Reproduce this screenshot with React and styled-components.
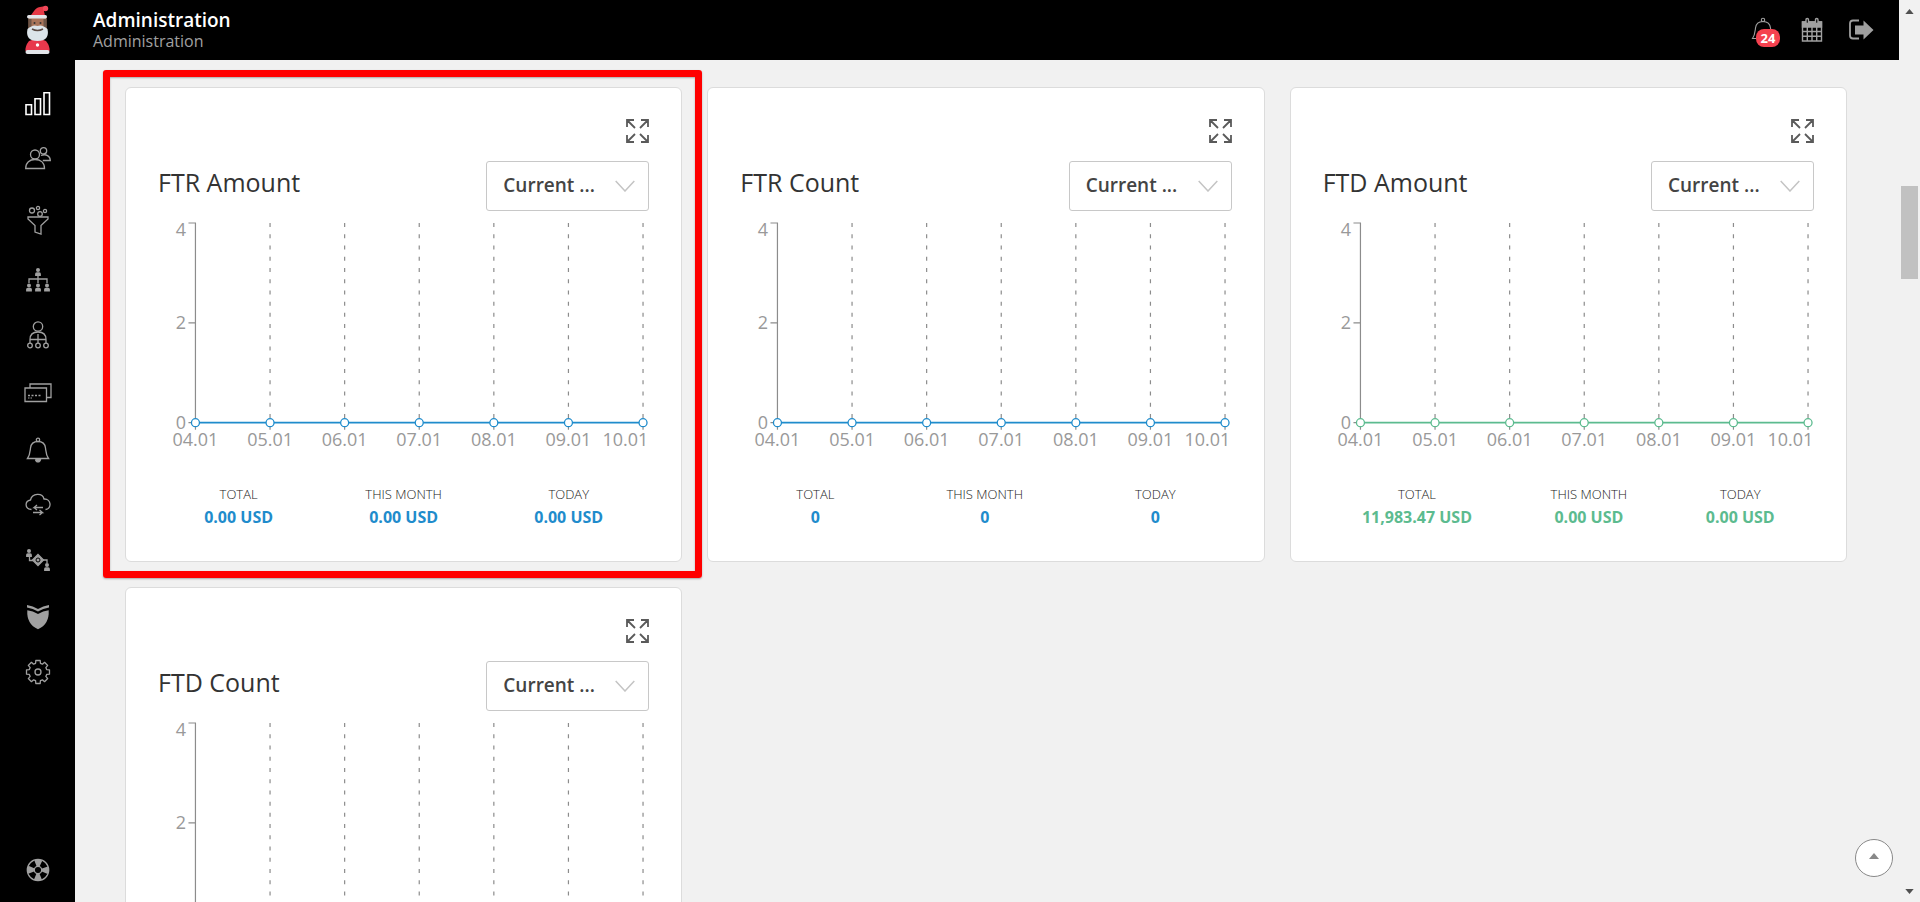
import React from "react";
import styled, { createGlobalStyle } from "styled-components";

const GlobalStyle = createGlobalStyle`
  *, *::before, *::after { box-sizing: border-box; }
  body {
    margin: 0;
    background: #f1f1f1;
    color: #333;
    font-family: "Open Sans", "Noto Sans", sans-serif;
  }
  button, select { font-family: inherit; }
  svg { display: block; }
`;

const Shell = styled.div`
  display: flex;
  height: 100vh;
  overflow: hidden;
`;

const Sidebar = styled.nav`
  display: flex;
  flex-direction: column;
  align-items: center;
  flex: none;
  width: 75px;
  background: #000;
`;

const Logo = styled.a`
  display: block;
  padding-top: 5px;
  height: 77px;
`;

const NavList = styled.ul`
  display: flex;
  flex-direction: column;
  flex: 1;
  margin: 0;
  padding: 0;
  list-style: none;
`;

const NavItem = styled.li`
  &:last-child {
    margin-top: auto;
    margin-bottom: 4px;
  }
`;

const NavLink = styled.a`
  display: grid;
  place-items: center;
  width: 75px;
  height: ${(p) => p.$height}px;
  color: ${(p) => (p.$active ? "#fff" : "#a0a0a0")};
`;

const Main = styled.div`
  display: flex;
  flex-direction: column;
  flex: 1;
  min-width: 0;
`;

const Header = styled.header`
  display: flex;
  align-items: center;
  justify-content: space-between;
  flex: none;
  height: 60px;
  padding: 0 25px 0 18px;
  background: #000;
`;

const Heading = styled.h1`
  margin: 0;
  color: #fff;
  font-size: 19px;
  line-height: 22px;
  font-weight: 600;
`;

const SubHeading = styled.p`
  margin: 0;
  color: #a0a0a0;
  font-size: 16px;
  line-height: 20px;
`;

const HeaderActions = styled.div`
  display: flex;
  align-items: center;
  gap: 23px;
`;

const HeaderButton = styled.button`
  position: relative;
  display: grid;
  place-items: center;
  width: 26px;
  height: 30px;
  padding: 0;
  border: 0;
  background: none;
  color: #a0a0a0;
`;

const Badge = styled.span`
  position: absolute;
  top: 14px;
  left: 6px;
  width: 24px;
  border-radius: 8px;
  background: #f5414f;
  color: #fff;
  font-size: 13px;
  line-height: 18px;
  font-weight: 700;
`;

const Board = styled.main`
  display: grid;
  grid-template-columns: repeat(3, minmax(0, 1fr));
  align-content: start;
  gap: 25px;
  flex: 1;
  min-height: 0;
  overflow: hidden;
  padding: 27px 52px 0 50px;
`;

const Card = styled.section`
  position: relative;
  padding: 30px 32px 31px;
  border: 1px solid #dcdcdc;
  border-radius: 6px;
  background: #fff;
`;

const Highlight = styled.div`
  position: absolute;
  inset: -18px -21px -17px -23px;
  border: 7px solid #f00;
  border-radius: 3px;
  box-shadow: 0 1px 2px rgba(0, 0, 0, 0.3), inset 0 1px 2px rgba(0, 0, 0, 0.3);
  pointer-events: none;
`;

const CardTools = styled.div`
  display: flex;
  justify-content: flex-end;
`;

const ExpandButton = styled.button`
  padding: 0;
  border: 0;
  background: none;
  color: #5a5a5a;
`;

const CardHead = styled.div`
  display: flex;
  align-items: center;
  justify-content: space-between;
  margin-top: 17px;
`;

const CardTitle = styled.h2`
  margin: 0 0 8px;
  color: #333;
  font-size: 25px;
  line-height: 34px;
  font-weight: 400;
`;

const SelectBox = styled.div`
  display: grid;
  align-items: center;
  width: 163px;

  & > * { grid-area: 1 / 1; }
  & > svg {
    justify-self: end;
    margin-right: 14px;
    pointer-events: none;
  }
`;

const PeriodSelect = styled.select`
  appearance: none;
  width: 100%;
  height: 50px;
  padding: 0 40px 2px 16px;
  border: 1px solid #c8c8c8;
  border-radius: 3px;
  background: #fff;
  color: #444;
  font-size: 19px;
  font-weight: 600;
`;

const ChartSvg = styled.svg`
  width: 100%;
  height: auto;
  margin-top: 4px;
  overflow: visible;

  text {
    fill: #999;
    font-size: 18px;
  }
`;

const Stats = styled.dl`
  display: flex;
  justify-content: space-around;
  margin: 29px 0 0;
  text-align: center;
`;

const StatLabel = styled.dt`
  color: #222;
  font-size: 13px;
  line-height: 20px;
  font-weight: 300;
  text-transform: uppercase;
`;

const StatValue = styled.dd`
  margin: 0;
  color: ${(p) => p.$color};
  font-size: 16px;
  line-height: 26px;
  font-weight: 700;
`;

const ScrollTrack = styled.div`
  display: flex;
  flex-direction: column;
  align-items: center;
  flex: none;
  width: 21px;
  padding: 9px 0 8px;
  background: #f1f1f1;
`;

const ScrollThumb = styled.div`
  width: 17px;
  height: 93px;
  margin: 172px 0 auto;
  background: #c1c1c1;
`;

const ToTop = styled.button`
  position: fixed;
  right: 27px;
  bottom: 25px;
  display: grid;
  place-items: center;
  width: 38px;
  height: 38px;
  padding: 0 0 4px;
  border: 1px solid #888;
  border-radius: 50%;
  background: #fff;
  color: #888;
`;

const Icon = ({ w = 26, h = 26, vb, children, ...rest }) => (
  <svg width={w} height={h} viewBox={vb || `0 0 ${w} ${h}`} fill="none" stroke="currentColor" strokeWidth="1.3" aria-hidden="true" {...rest}>
    {children}
  </svg>
);

const Santa = () => (
  <svg width="26" height="50" viewBox="0 0 26 50" aria-hidden="true">
    <path d="M5 11C8 9 9 3 15 2Q18 1 21 2L22 5L19 6L20 11Z" fill="#e63946" />
    <circle cx="20.500" cy="3.500" r="2.700" fill="#f0485a" />
    <rect x="3.500" y="12" width="18" height="13" fill="#a9745a" />
    <path d="M3.500 14h3v10h-3zM18.500 14h3v10h-3z" fill="#6d5548" />
    <rect x="2" y="10" width="20" height="3.500" rx="1.700" fill="#e3e6ea" />
    <path d="M4 36Q13 32 21 36Q25 41 24.500 46H.5Q0 41 4 36Z" fill="#e8384d" />
    <rect x=".5" y="45" width="24" height="4" rx="2" fill="#e3e6ea" />
    <path d="M2.500 24Q8 19 12.500 21Q17 19 22.500 24Q25 36 12.500 36Q0 36 2.500 24Z" fill="#dce4ea" />
    <path d="M7 24Q12.500 27 18 24" stroke="#5b4a44" strokeWidth="1.500" fill="none" />
    <circle cx="9.500" cy="18" r="1" fill="#333" />
    <circle cx="15.500" cy="18" r="1" fill="#333" />
    <circle cx="12.500" cy="40" r="1.700" fill="#fff" />
  </svg>
);

const BellPath = () => (
  <>
    <path d="M2.500 21.500C5 18 5 15 5.500 11C6 6.500 8.500 4.500 13 4.500S20 6.500 20.500 11C21 15 21 18 23.500 21.500Z" />
    <circle cx="13" cy="2.900" r="1.700" />
  </>
);

const person = (x, y) => (
  <g key={`${x}-${y}`} fill="currentColor" stroke="none">
    <circle cx={x} cy={y} r="2" />
    <path d={`M${x - 2.900} ${y + 6}V${y + 4}q0-1.700 1.700-1.700h2.400q1.700 0 1.700 1.700v2z`} />
  </g>
);

const gearPath = (() => {
  const n = 8;
  const points = [];
  for (let i = 0; i < n; i++) {
    const a = (i * 2 * Math.PI) / n - Math.PI / 2;
    [[-0.27, 9], [-0.19, 11.700], [0.19, 11.700], [0.27, 9]].forEach(([d, r]) => {
      points.push(`${(13 + r * Math.cos(a + d)).toFixed(2)} ${(13 + r * Math.sin(a + d)).toFixed(2)}`);
    });
  }
  return `M${points.join("L")}Z`;
})();

const icons = {
  bars: (
    <Icon strokeWidth="1.600">
      <path d="M1 14.800h5.500v9.700H1zM10 8.800h5.500v15.700H10zM19 2.800h5.500v21.700H19z" />
    </Icon>
  ),
  users: (
    <Icon>
      <circle cx="10" cy="8.500" r="4.500" />
      <path d="M.7 22.500c0-6 4-9 9.300-9s9.500 3 9.500 9z" />
      <circle cx="18.500" cy="4.800" r="3.200" />
      <path d="M16 9.500c5-2 9.300.5 9.300 5h-7.500" />
    </Icon>
  ),
  funnel: (
    <Icon w={26} h={30}>
      <circle cx="7" cy="5.500" r="2.500" />
      <circle cx="13" cy="3" r="1.600" />
      <circle cx="20" cy="6" r="1.600" />
      <circle cx="15" cy="9" r="2.300" />
      <path d="M3 12h20v2l-7 6.500v8.500l-6-2v-6.500L3 14z" />
    </Icon>
  ),
  tree: (
    <Icon>
      {person(13, 3)}
      {person(4, 18.500)}
      {person(13, 18.500)}
      {person(22, 18.500)}
      <path d="M13 9v7M4 16v-4h18v4" />
    </Icon>
  ),
  manager: (
    <Icon w={26} h={28}>
      <circle cx="13" cy="5.500" r="4.700" />
      <path d="M5 18.500c0-5 3-7.500 8-7.500s8 2.500 8 7.500zM13 13v9M5 22v-3.500M21 22v-3.500" />
      <circle cx="5" cy="24.500" r="2.300" />
      <circle cx="13" cy="24.500" r="2.300" />
      <circle cx="21" cy="24.500" r="2.300" />
    </Icon>
  ),
  cards: (
    <Icon w={28} h={22}>
      <path d="M1 6h21.500v13.500H1zM6 6V2h21v13.500h-4.500" />
      <path d="M4 13.500h14" strokeDasharray="2 1.500" />
      <path d="M4 16h4" strokeDasharray="1.500 1" strokeWidth="1" />
    </Icon>
  ),
  bell: (
    <Icon>
      <BellPath />
      <path d="M10.500 22.500h5q-.5 2.300-2.500 2.300t-2.500-2.300" fill="currentColor" />
    </Icon>
  ),
  cloud: (
    <Icon>
      <path d="M6.500 18.500C-.5 18-.5 10 5.500 9C7 2 17.500 1.500 19 8C26.500 7.500 27 18 20.500 18.500" />
      <path d="M18 16.500H9l3-2.500M9 16.500l3 2.500M8 21.500h9.500l-3-2.500M17.500 21.500l-3 2.500" />
    </Icon>
  ),
  flow: (
    <Icon>
      {person(4, 4)}
      {person(22, 18)}
      <path d="M4.500 10v3.500H8M18 13h4v3" />
      <path d="M13 7.500l5.500 5.500-5.500 5.500L7.500 13z" fill="currentColor" />
      <circle cx="13" cy="13" r="2" stroke="#000" strokeWidth="1" />
    </Icon>
  ),
  shield: (
    <Icon fill="currentColor" stroke="none">
      <path d="M2 1q6 1 11 4q5-3 11-4v2.600q-6 .9-11 3.900q-5-3-11-3.900z" />
      <path d="M2.300 6.200q5.700.8 10.700 3.800q5-3 10.700-3.800q.8 14-10.700 19q-11.500-5-10.700-19z" />
    </Icon>
  ),
  gear: (
    <Icon strokeLinejoin="round">
      <path d={gearPath} />
      <circle cx="13" cy="13" r="3" />
    </Icon>
  ),
  help: (
    <Icon w={24} h={24}>
      <circle cx="12" cy="12" r="7" strokeWidth="7" strokeDasharray="5.500 5.500" strokeDashoffset="2.750" />
      <circle cx="12" cy="12" r="10.700" />
      <circle cx="12" cy="12" r="3.700" />
    </Icon>
  ),
};

const navItems = [
  ["Dashboard", "bars", 52],
  ["Clients", "users", 60],
  ["Leads", "funnel", 62],
  ["Hierarchy", "tree", 57],
  ["Partners", "manager", 54],
  ["Payments", "cards", 61],
  ["Notifications", "bell", 54],
  ["Cloud", "cloud", 54],
  ["Distribution", "flow", 58],
  ["Security", "shield", 56],
  ["Settings", "gear", 54],
  ["Support", "help", 56],
];

const BLUE = "#1f8ccc";
const GREEN = "#5cbb8f";
const noAmounts = ["0.00 USD", "0.00 USD", "0.00 USD"];
const noCounts = ["0", "0", "0"];

const reports = [
  { title: "FTR Amount", color: BLUE, values: noAmounts, highlighted: true },
  { title: "FTR Count", color: BLUE, values: noCounts },
  { title: "FTD Amount", color: GREEN, values: ["11,983.47 USD", "0.00 USD", "0.00 USD"] },
  { title: "FTD Count", color: GREEN, values: noCounts },
];

const days = ["04.01", "05.01", "06.01", "07.01", "08.01", "09.01", "10.01"];
const dayX = (i) => 37.5 + i * 74.7;

const Chart = ({ color, title }) => (
  <ChartSvg viewBox="0 0 492 240" role="img" aria-label={title}>
    <g stroke="#8c8c8c" strokeWidth="1.200">
      {days.slice(1).map((d, i) => (
        <line key={d} x1={dayX(i + 1)} x2={dayX(i + 1)} y1="8" y2="208" strokeDasharray="4 7.250" />
      ))}
      {days.map((d, i) => (
        <line key={d} x1={dayX(i)} x2={dayX(i)} y1="208" y2="215" />
      ))}
      <path d="M30.500 8H37.500V208H30.500M30.500 108H37.500" fill="none" />
    </g>
    <g textAnchor="end">
      <text x="28" y="21">4</text>
      <text x="28" y="114">2</text>
      <text x="28" y="214">0</text>
    </g>
    <g textAnchor="middle">
      {days.map((d, i) => (
        <text key={d} x={i === days.length - 1 ? 491 : dayX(i)} y="231" textAnchor={i === days.length - 1 ? "end" : "middle"}>
          {d}
        </text>
      ))}
    </g>
    <g stroke={color} fill="#fff">
      <line x1={dayX(0)} x2={dayX(6)} y1="208" y2="208" strokeWidth="1.800" />
      {days.map((d, i) => (
        <circle key={d} cx={dayX(i)} cy="208" r="4" strokeWidth="1.300" />
      ))}
    </g>
  </ChartSvg>
);

const ReportCard = ({ title, color, values, highlighted }) => (
  <Card>
    <CardTools>
      <ExpandButton type="button" aria-label={`Expand ${title}`}>
        <Icon w={24} h={26} strokeWidth="1.800">
          <path d="M2 9V2h7M2 2l8 8M16 2h7v7M23 2l-8 8M2 17v7h7M2 24l8-8M16 24h7v-7M23 24l-8-8" />
        </Icon>
      </ExpandButton>
    </CardTools>
    <CardHead>
      <CardTitle>{title}</CardTitle>
      <SelectBox>
        <PeriodSelect aria-label={`${title} period`}>
          <option>Current ...</option>
        </PeriodSelect>
        <Icon w={20} h={12} stroke="#c4c4c4" strokeWidth="1.500">
          <path d="M.7 1L10 11L19.300 1" />
        </Icon>
      </SelectBox>
    </CardHead>
    <Chart color={color} title={`${title} chart`} />
    <Stats>
      {["Total", "This month", "Today"].map((label, i) => (
        <div key={label}>
          <StatLabel>{label}</StatLabel>
          <StatValue $color={color}>{values[i]}</StatValue>
        </div>
      ))}
    </Stats>
    {highlighted && <Highlight />}
  </Card>
);

const Arrow = ({ down, fill = "#505050", w = 9, h = 5 }) => (
  <svg width={w} height={h} viewBox="0 0 10 6" aria-hidden="true">
    <path d={down ? "M0 0H10L5 6Z" : "M0 6H10L5 0Z"} fill={fill} />
  </svg>
);

export default function App() {
  return (
    <>
      <GlobalStyle />
      <Shell>
        <Sidebar aria-label="Main">
          <Logo href="#" aria-label="Home">
            <Santa />
          </Logo>
          <NavList>
            {navItems.map(([label, icon, height], i) => (
              <NavItem key={label}>
                <NavLink href="#" aria-label={label} $height={height} $active={i === 0}>
                  {icons[icon]}
                </NavLink>
              </NavItem>
            ))}
          </NavList>
        </Sidebar>
        <Main>
          <Header>
            <div>
              <Heading>Administration</Heading>
              <SubHeading>Administration</SubHeading>
            </div>
            <HeaderActions>
              <HeaderButton type="button" aria-label="Notifications">
                <Icon strokeWidth="1.100">
                  <BellPath />
                </Icon>
                <Badge>24</Badge>
              </HeaderButton>
              <HeaderButton type="button" aria-label="Calendar">
                <Icon w={22} h={26} strokeWidth="1.400">
                  <path d="M1.500 5h19v19h-19z" />
                  <path d="M1.500 5h19v5h-19z" fill="currentColor" />
                  <path d="M1.500 14.500h19M1.500 19.200h19M6.300 10v14M11 10v14M15.700 10v14" />
                  <rect x="5" y="1.500" width="2.500" height="5" rx="1.200" fill="#000" />
                  <rect x="14.500" y="1.500" width="2.500" height="5" rx="1.200" fill="#000" />
                </Icon>
              </HeaderButton>
              <HeaderButton type="button" aria-label="Log out">
                <Icon w={26} h={24}>
                  <path d="M11 2.500H5Q2 2.500 2 5.500v12q0 3 3 3h6" strokeWidth="1.800" />
                  <path d="M7 7.500h8.500V2.500l10 9.500-10 9.500v-5H7z" fill="currentColor" stroke="none" />
                </Icon>
              </HeaderButton>
            </HeaderActions>
          </Header>
          <Board>
            {reports.map((report) => (
              <ReportCard key={report.title} {...report} />
            ))}
          </Board>
        </Main>
        <ScrollTrack aria-hidden="true">
          <Arrow />
          <ScrollThumb />
          <Arrow down />
        </ScrollTrack>
      </Shell>
      <ToTop type="button" aria-label="Back to top">
        <Arrow fill="#888" w={10} h={6} />
      </ToTop>
    </>
  );
}
